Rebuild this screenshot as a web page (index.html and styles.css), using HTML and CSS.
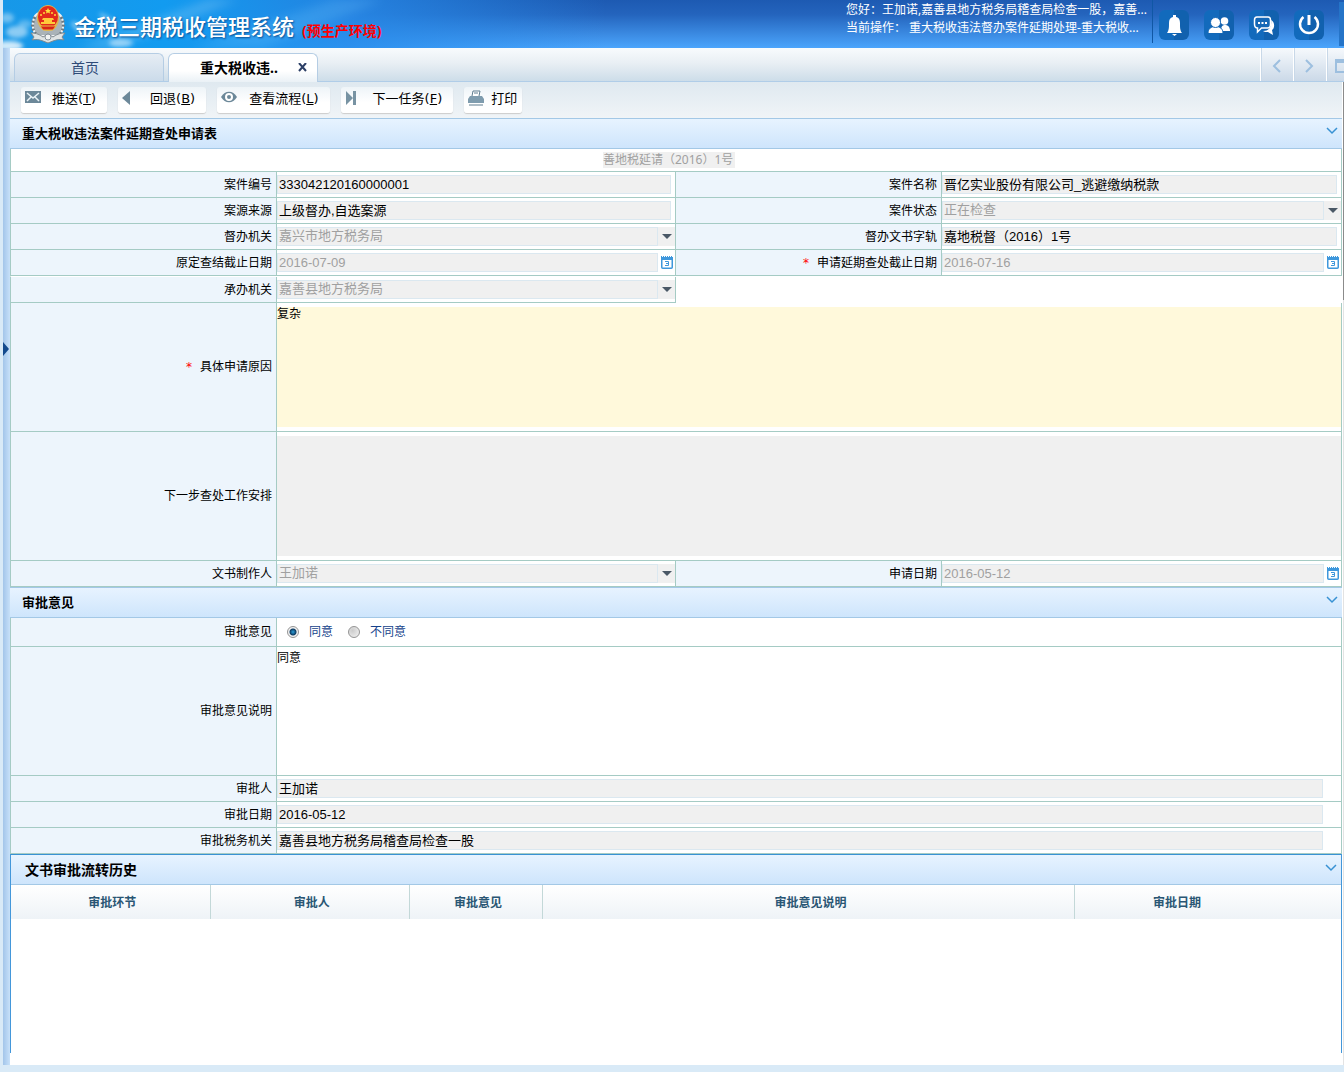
FILE: index.html
```html
<!DOCTYPE html>
<html lang="zh-CN">
<head>
<meta charset="utf-8">
<title>金税三期税收管理系统</title>
<link rel="stylesheet" href="styles.css">
</head>
<body>
<header class="top">
  <svg class="clouds" width="420" height="48" viewBox="0 0 420 48" aria-hidden="true">
    <defs>
      <filter id="soft" x="-30%" y="-30%" width="160%" height="160%"><feGaussianBlur stdDeviation="2"/></filter>
      <filter id="ray" x="-30%" y="-30%" width="160%" height="160%"><feGaussianBlur stdDeviation="5"/></filter>
    </defs>
    <g fill="#fff" filter="url(#soft)">
      <ellipse cx="6" cy="46" rx="14" ry="5" opacity=".8"/>
      <ellipse cx="14" cy="32" rx="11" ry="6" opacity=".5"/>
      <ellipse cx="22" cy="24" rx="7" ry="4" opacity=".3"/>
      <ellipse cx="4" cy="18" rx="7" ry="5" opacity=".4"/>
      <ellipse cx="78" cy="29" rx="12" ry="4" opacity=".4" transform="rotate(35 78 29)"/>
      <ellipse cx="118" cy="43" rx="12" ry="4" opacity=".5"/>
      <ellipse cx="106" cy="20" rx="12" ry="3" opacity=".35" transform="rotate(35 106 20)"/>
    </g>
    <path d="M75 48 205 0h30L110 48z" fill="#fff" opacity=".18" filter="url(#ray)"/>
    <path d="M190 48 330 0h50L260 48z" fill="#7fd0ff" opacity=".2" filter="url(#ray)"/>
  </svg>
  <svg class="emblem" width="36" height="40" viewBox="0 0 36 40" aria-hidden="true">
    <path d="M8 9C1 14 1 27 8 32h20c7-5 7-18 0-23" fill="#aab3b8" stroke="#eef1f2" stroke-width="2"/>
    <path d="M5 13c-4 7-3 14 3 19M31 13c4 7 3 14-3 19" fill="none" stroke="#6c7880" stroke-width="3" stroke-dasharray="2 2"/>
    <path d="M1 29c6 0 9 2 12 4l5-3 5 3c3-2 6-4 12-4l-3 4 2 3c-6-1-8 0-11 1l-5 2-5-2c-3-1-5-2-11-1l2-3z" fill="#dfe3e3" stroke="#7f898e"/>
    <circle cx="18" cy="33" r="3" fill="#f1f3f3" stroke="#87929a"/>
    <ellipse cx="18" cy="14" rx="11" ry="13" fill="#e0b34f"/>
    <ellipse cx="18" cy="13" rx="10" ry="11" fill="#e32a1c"/>
    <path d="M18 4l1 2h2l-1.500 1.500.5 2-2-1-2 1 .5-2L15 6h2z" fill="#ffe03c"/>
    <g fill="#ffd93a"><circle cx="11" cy="11" r="1"/><circle cx="14" cy="9" r="1"/><circle cx="22" cy="9" r="1"/><circle cx="25" cy="11" r="1"/></g>
    <path d="M13 14h10l1 2h-2v2h3v2H11v-2h3v-2h-2z" fill="#ffc93a"/>
    <path d="M10 22h16l-3 4H13z" fill="#d82318" stroke="#e9bb45"/>
  </svg>
  <h1 class="brand">金税三期税收管理系统</h1>
  <span class="env">(预生产环境)</span>
  <div class="who">
    <p>您好：王加诺,嘉善县地方税务局稽查局检查一股，嘉善...</p>
    <p>当前操作： 重大税收违法督办案件延期处理-重大税收...</p>
  </div>
  <nav class="tools">
    <button class="tool" aria-label="通知"><svg width="30" height="30" viewBox="0 0 30 30"><path d="M14 5h3v2c3 .5 4 3 4 6 0 5 0 7 2 10H8c2-3 2-5 2-10 0-3 1-5.500 4-6zM13 24h5l-2.500 2z" fill="#fff"/></svg></button>
    <button class="tool" aria-label="用户"><svg width="30" height="30" viewBox="0 0 30 30" fill="#fff"><circle cx="20.500" cy="11" r="3.800"/><path d="M17 21c0-4 1-6 4-6s5 2 5 6z"/><g stroke="#1468b6" stroke-width="1"><path d="M4 23.500c0-5 3-7 7.500-7s7.500 2 7.500 7z"/><circle cx="11.500" cy="12.500" r="5"/></g></svg></button>
    <button class="tool" aria-label="消息"><svg width="30" height="30" viewBox="0 0 30 30"><path d="M22 10c4 2 4 8 1 10l1 5-5-3c-2 0-4 0-5-1 6 0 9-4 8-11z" fill="#fff"/><path d="M8 7h11c2 0 2.500 1 2.500 3v4c0 3-1 4-3 4h-6l-4 4v-4C6 18 5.500 16 5.500 14v-4c0-2 1-3 2.500-3z" fill="#1468b6" stroke="#fff" stroke-width="1.500"/><path d="M9 12h2v2H9zM12.500 12h2v2h-2zM16 12h2v2h-2z" fill="#fff"/></svg></button>
    <button class="tool" aria-label="退出"><svg width="30" height="30" viewBox="0 0 30 30" fill="none" stroke="#fff"><path d="M9.500 7a9 9 0 1 0 11 0" stroke-width="2.500"/><path d="M15 5v10" stroke-width="3"/></svg></button>
    <span class="more"></span>
  </nav>
</header>

<div class="shell">
  <aside class="side"><button class="expand" aria-label="展开菜单"></button></aside>
  <main class="main">
    <div class="tabs">
      <a class="tab" href="#home">首页</a>
      <div class="tab current"><a href="#task">重大税收违..</a><button class="close" aria-label="关闭"><svg width="9" height="9" viewBox="0 0 9 9"><path d="M1 0l7 8M8 0L1 8" stroke="#2c3f66" stroke-width="2" fill="none"/></svg></button></div>
      <div class="pager">
        <button aria-label="向左"><svg width="32" height="33" viewBox="0 0 32 33"><path d="M19 12l-6 6 6 6" fill="none" stroke="#9dbfdf" stroke-width="2"/></svg></button>
        <button aria-label="向右"><svg width="32" height="33" viewBox="0 0 32 33"><path d="M12 12l6 6-6 6" fill="none" stroke="#9dbfdf" stroke-width="2"/></svg></button>
        <button aria-label="窗口"><svg width="32" height="33" viewBox="0 0 32 33"><path d="M9 12h14v12H9z" fill="none" stroke="#9dbfdf" stroke-width="2"/><path d="M8 11h16v4H8z" fill="#9dbfdf"/></svg></button>
      </div>
    </div>

    <div class="work">
      <div class="page">
        <div class="bar">
          <button class="act"><svg width="16" height="16" viewBox="0 0 16 16"><path d="M0 1h16v12H0z" fill="#6c8899"/><path d="M2 3l6 5 6-5M2 11l4-4M14 11l-4-4" fill="none" stroke="#eaf2f6" stroke-width="1.500"/></svg><span>推送(<u>T</u>)</span></button>
          <button class="act"><svg width="16" height="16" viewBox="0 0 16 16"><path d="M8 1v14L0 8z" fill="#6c8899"/></svg><span class="in">回退(<u>B</u>)</span></button>
          <button class="act"><svg width="16" height="16" viewBox="0 0 16 16"><path d="M0 7c4-7 12-7 16 0-4 7-12 7-16 0z" fill="#6c8899"/><circle cx="8" cy="7" r="3" fill="none" stroke="#fff" stroke-width="2"/></svg><span class="in">查看流程(<u>L</u>)</span></button>
          <button class="act"><svg width="16" height="16" viewBox="0 0 16 16"><path d="M1 1l7 7-7 7zM8 1h3v14H8z" fill="#7893a3"/></svg><span class="in">下一任务(<u>F</u>)</span></button>
          <button class="act print"><svg width="16" height="16" viewBox="0 0 16 16"><path d="M4 6l1-5h7l-1 5" fill="#fff" stroke="#5f7d8f"/><path d="M6 3h4" stroke="#5f7d8f"/><path d="M2 6h12l2 3v4H0V9z" fill="#7f9cae"/><path d="M1 15h14" stroke="#5f7d8f"/></svg><span>打印</span></button>
        </div>

        <h2 class="sec">重大税收违法案件延期查处申请表<button class="fold" aria-label="折叠"><svg width="12" height="8" viewBox="0 0 12 8"><path d="M1 1l5 5 5-5" fill="none" stroke="#3892d3" stroke-width="1.500"/></svg></button></h2>
        <form class="form">
          <div class="row title"><input aria-label="文书号" value="善地税延请（2016）1号" disabled></div>
          <div class="row">
            <label for="a1">案件编号</label><div class="cell"><input id="a1" class="box" value="333042120160000001" readonly></div>
            <label for="a2">案件名称</label><div class="cell"><input id="a2" class="box zh" value="晋亿实业股份有限公司_逃避缴纳税款" readonly></div>
          </div>
          <div class="row">
            <label for="a3">案源来源</label><div class="cell"><input id="a3" class="box zh" value="上级督办,自选案源" readonly></div>
            <label for="a4">案件状态</label><div class="cell drop"><select id="a4" class="box zh" disabled><option>正在检查</option></select><i class="arrow"></i></div>
          </div>
          <div class="row">
            <label for="a5">督办机关</label><div class="cell drop"><select id="a5" class="box zh" disabled><option>嘉兴市地方税务局</option></select><i class="arrow"></i></div>
            <label for="a6">督办文书字轨</label><div class="cell"><input id="a6" class="box zh" value="嘉地税督（2016）1号" readonly></div>
          </div>
          <div class="row">
            <label for="a7">原定查结截止日期</label><div class="cell date"><input id="a7" class="box" value="2016-07-09" disabled><svg class="cal" width="12" height="14" viewBox="0 0 12 14"><rect x=".75" y="1.750" width="10.500" height="11.500" rx="1" fill="#fff" stroke="#3e97dc" stroke-width="1.500"/><path d="M0 1h12v4H0z" fill="#3e97dc"/><path d="M1 1.500h11" stroke="#fff" stroke-dasharray="1 1"/><path d="M4 6.500h3.500v4H4M5 8.500h2.500" fill="none" stroke="#3e97dc"/></svg></div>
            <label for="a8"><span class="req">*</span>申请延期查处截止日期</label><div class="cell date"><input id="a8" class="box" value="2016-07-16" disabled><svg class="cal" width="12" height="14" viewBox="0 0 12 14"><rect x=".75" y="1.750" width="10.500" height="11.500" rx="1" fill="#fff" stroke="#3e97dc" stroke-width="1.500"/><path d="M0 1h12v4H0z" fill="#3e97dc"/><path d="M1 1.500h11" stroke="#fff" stroke-dasharray="1 1"/><path d="M4 6.500h3.500v4H4M5 8.500h2.500" fill="none" stroke="#3e97dc"/></svg></div>
          </div>
          <div class="row half">
            <label for="a9">承办机关</label><div class="cell drop"><select id="a9" class="box zh" disabled><option>嘉善县地方税务局</option></select><i class="arrow"></i></div>
          </div>
          <div class="row wide tall">
            <label for="b1"><span class="req">*</span>具体申请原因</label><div class="cell"><textarea id="b1" class="need">复杂</textarea></div>
          </div>
          <div class="row wide tall">
            <label for="b2">下一步查处工作安排</label><div class="cell"><textarea id="b2" disabled></textarea></div>
          </div>
          <div class="row">
            <label for="c1">文书制作人</label><div class="cell drop"><select id="c1" class="box zh" disabled><option>王加诺</option></select><i class="arrow"></i></div>
            <label for="c2">申请日期</label><div class="cell date"><input id="c2" class="box" value="2016-05-12" disabled><svg class="cal" width="12" height="14" viewBox="0 0 12 14"><rect x=".75" y="1.750" width="10.500" height="11.500" rx="1" fill="#fff" stroke="#3e97dc" stroke-width="1.500"/><path d="M0 1h12v4H0z" fill="#3e97dc"/><path d="M1 1.500h11" stroke="#fff" stroke-dasharray="1 1"/><path d="M4 6.500h3.500v4H4M5 8.500h2.500" fill="none" stroke="#3e97dc"/></svg></div>
          </div>
        </form>

        <h2 class="sec">审批意见<button class="fold" aria-label="折叠"><svg width="12" height="8" viewBox="0 0 12 8"><path d="M1 1l5 5 5-5" fill="none" stroke="#3892d3" stroke-width="1.500"/></svg></button></h2>
        <form class="form">
          <div class="row wide">
            <span class="name" id="op">审批意见</span>
            <div class="cell choice" role="radiogroup" aria-labelledby="op">
              <label><input type="radio" name="op" checked>同意</label>
              <label><input type="radio" name="op">不同意</label>
            </div>
          </div>
          <div class="row wide tall">
            <label for="d1">审批意见说明</label><div class="cell"><textarea id="d1">同意</textarea></div>
          </div>
          <div class="row wide"><label for="d2">审批人</label><div class="cell long"><input id="d2" class="box zh" value="王加诺" readonly></div></div>
          <div class="row wide"><label for="d3">审批日期</label><div class="cell long"><input id="d3" class="box" value="2016-05-12" readonly></div></div>
          <div class="row wide"><label for="d4">审批税务机关</label><div class="cell long"><input id="d4" class="box zh" value="嘉善县地方税务局稽查局检查一股" readonly></div></div>
        </form>

        <section class="history">
          <h2 class="sec">文书审批流转历史<button class="fold" aria-label="折叠"><svg width="12" height="8" viewBox="0 0 12 8"><path d="M1 1l5 5 5-5" fill="none" stroke="#3892d3" stroke-width="1.500"/></svg></button></h2>
          <table class="log">
            <thead><tr><th class="c15">审批环节</th><th class="c15">审批人</th><th class="c10">审批意见</th><th class="c40">审批意见说明</th><th class="c20">审批日期</th></tr></thead>
            <tbody></tbody>
          </table>
        </section>
      </div>
      <div class="scroll"><div class="thumb"></div></div>
    </div>
  </main>
</div>
</body>
</html>
```
FILE: styles.css
```css
* { box-sizing: border-box; }
body {
  margin: 0;
  min-height: 100vh;
  padding: 0 0 7px 3px;
  display: flex;
  flex-direction: column;
  overflow-x: hidden;
  background: #d9eaf7;
  font: 12px/16px "Noto Sans", "Noto Sans CJK SC", sans-serif;
  color: #000;
}
button {
  margin: 0;
  padding: 0;
  border: 0;
  background: none;
  font: inherit;
  color: inherit;
  cursor: pointer;
}
svg { display: block; flex: none; }
a { color: inherit; text-decoration: none; }
p, h1, h2 { margin: 0; }

/* top banner */
.top {
  position: relative;
  height: 48px;
  display: flex;
  align-items: center;
  overflow: hidden;
  color: #fff;
  background:
    linear-gradient(90deg, #1798e8 0, #129bf0 12%, rgba(38, 140, 235, .8) 26%, rgba(40, 120, 220, 0) 45%),
    linear-gradient(#1d5ab2 0, #2464bd 30%, #4ba5fc 100%);
}
.clouds { position: absolute; left: 0; top: 0; }
.emblem { position: relative; margin: 0 8px 0 27px; }
.brand {
  position: relative;
  font-size: 22px;
  line-height: 32px;
  font-weight: 500;
  margin-top: 4px;
  white-space: nowrap;
  text-shadow: 1px 1px 2px #0b4f94;
}
.env {
  position: relative;
  margin: 14px 0 0 8px;
  font-size: 14px;
  font-weight: 700;
  color: #f00;
  white-space: nowrap;
}
.who {
  margin-left: auto;
  width: 307px;
  height: 43px;
  align-self: flex-start;
  padding-top: 1px;
  border-right: 1px solid #1057a5;
  line-height: 18px;
  white-space: nowrap;
  overflow: hidden;
}
.tools { display: flex; gap: 15px; padding: 2px 0 0 6px; }
.tool {
  width: 30px;
  height: 30px;
  border-radius: 6px;
  background: linear-gradient(90deg, #126abc 50%, #1161ae 50%);
}
.more { width: 5px; height: 44px; margin: -8px 0 -6px; background: #2574c8; }

.shell { flex: 1; display: flex; }
.side {
  flex: 0 0 7px;
  background: linear-gradient(90deg, #a3c5e9, #b5d3f2 50%, #c8e1f9);
}
.expand {
  display: block;
  margin-top: 294px;
  border-left: 6px solid #134a8e;
  border-top: 7px solid transparent;
  border-bottom: 7px solid transparent;
}
.main { flex: 1; min-width: 0; display: flex; flex-direction: column; background: #fff; }

/* tabs */
.tabs {
  height: 34px;
  display: flex;
  align-items: flex-end;
  gap: 4px;
  padding-left: 4px;
  border-bottom: 1px solid #b0cde8;
  background: linear-gradient(#f8fbfd, #e9eff4 45%, #cddde9);
}
.tab {
  width: 150px;
  height: 28px;
  border: 1px solid #b5cde4;
  border-bottom: 0;
  border-radius: 6px 6px 0 0;
  background: linear-gradient(#e6edf4, #cbdbea);
  font-size: 14px;
  line-height: 28px;
  text-align: center;
  color: #2f4b78;
  padding-right: 8px;
}
.current {
  height: 29px;
  margin-bottom: -1px;
  padding: 0 10px 0 31px;
  display: flex;
  justify-content: space-between;
  background: linear-gradient(#fff 60%, #eaf1f6);
  font-weight: 700;
  color: #000;
}
.close { height: 27px; }
.pager { margin-left: auto; display: flex; width: 84px; overflow: hidden; }
.pager button {
  flex: 0 0 33px;
  border-left: 1px solid #fff;
  box-shadow: inset 1px 0 #c8d8e8;
  background: linear-gradient(#f6f9fc, #cbd9e8);
}

.work { flex: 1; display: flex; }
.page { flex: 1; min-width: 0; display: flex; flex-direction: column; padding-bottom: 12px; }
.scroll { flex: 0 0 2px; border-left: 1px solid #fff; background: #e3e3e3; }
.thumb { height: 218px; background: #8b8b8b; }

/* action bar */
.bar {
  height: 36px;
  display: flex;
  gap: 11px;
  padding: 5px 0 5px 11px;
  background: linear-gradient(#dfe9f0, #f0f4f7);
}
.act {
  display: flex;
  gap: 11px;
  padding: 3px 11px 0 4px;
  border-radius: 3px;
  background: linear-gradient(#eef4f8, #fff 60%);
  box-shadow: 0 1px 1px #ccc;
  font: 13px/17px "DejaVu Sans", "Noto Sans CJK SC", sans-serif;
  white-space: nowrap;
}
.in { padding-left: 1px; }
.print { gap: 7px; padding-right: 5px; }

/* section headings */
.sec {
  height: 31px;
  display: flex;
  align-items: center;
  justify-content: space-between;
  padding: 0 4px 2px 12px;
  border: solid #a3c8e6;
  border-width: 1px 0;
  background: linear-gradient(#e7f3ff, #cee5fc);
  font-size: 13px;
  font-weight: 700;
}
.fold { padding-bottom: 3px; }

/* form rows */
.row {
  display: grid;
  grid-template-columns: 2fr 3fr 2fr 3fr;
  min-height: 26px;
  border: solid #a5cbc4;
  border-width: 0 1px 1px;
}
.row > label, .name {
  display: flex;
  align-items: center;
  justify-content: flex-end;
  padding-right: 4px;
  border-right: 1px solid #a5cbc4;
  background: #edf5fc;
}
.req { margin-right: 8px; color: #f00; font-family: "DejaVu Sans", sans-serif; }
.cell { min-width: 0; display: flex; padding: 3px 4px 3px 0; }
.row > .cell:nth-child(2) { border-right: 1px solid #a5cbc4; }
.row.wide > .cell:nth-child(2) { border-right: 0; }
.wide { grid-template-columns: 1fr 4fr; }
.half { border-top: 1px solid #fff; border-right-color: #fff; border-bottom: 0; }
.half > * { border-bottom: 1px solid #a5cbc4; }
.box {
  flex: 1;
  min-width: 0;
  height: 19px;
  margin: 0;
  padding: 0 1px;
  border: 1px solid #dbe8f0;
  border-radius: 0;
  background: #f0f0f0;
  font: 13px/17px "Liberation Sans", "Noto Sans CJK SC", sans-serif;
  color: #000;
  appearance: none;
}
.zh { padding-bottom: 2px; line-height: 15px; }
.box:disabled { color: #a0a0a0; opacity: 1; }
.drop { padding-right: 0; }
.arrow {
  flex: 0 0 17px;
  height: 19px;
  background: #f0f0f0;
  display: flex;
  justify-content: center;
  align-items: center;
}
.arrow::before {
  content: "";
  border: 5px solid transparent;
  border-top-color: #4a5866;
  border-bottom: 0;
}
.date { gap: 3px; padding-right: 2px; }
.cal { margin-top: 2px; }
.long { padding-right: 18px; }
.title { display: flex; min-height: 23px; align-items: center; justify-content: center; padding-right: 14px; }
.title input {
  width: 132px;
  height: 16px;
  padding: 0;
  border: 0;
  background: #f0f0f0;
  font: inherit;
  color: #a0a0a0;
}
.tall .cell { padding: 4px 0; }
textarea {
  flex: 1;
  height: 120px;
  margin: 0;
  padding: 0;
  border: 0;
  resize: none;
  background: #fff;
  font: 12px/14px "Liberation Sans", "Noto Sans CJK SC", sans-serif;
  color: #000;
}
textarea:disabled { background: #f0f0f0; }
.need { background: #fff9db; }
.choice { min-height: 28px; padding: 0 10px; gap: 15px; align-items: center; color: #15428b; }
.choice label { display: flex; align-items: center; gap: 10px; }
.choice input {
  appearance: none;
  width: 12px;
  height: 12px;
  margin: 0;
  border: 1px solid #949494;
  border-radius: 50%;
  background: radial-gradient(circle at 35% 35%, #ccc, #f4f4f4);
}
.choice input:checked { background: radial-gradient(circle, #2aa0dc 0, #0f3c62 3px, #f2f2f2 4px); }

/* history */
.history { flex: 1; border: solid #4397da; border-width: 0 1px; }
.history .sec { border-top-color: #3892d3; font-size: 14px; padding: 0 4px 0 14px; }
.log { width: 100%; table-layout: fixed; border-collapse: separate; border-spacing: 0; }
.log th {
  height: 34px;
  padding: 2px 0 0 4px;
  border-right: 1px solid #c3d8d8;
  background: linear-gradient(#fff, #eef3f7);
  color: #2a5674;
  font-weight: 700;
}
.log th:last-child { border-right: 0; padding-right: 66px; }
.c15 { width: 15%; }
.c10 { width: 10%; }
.c40 { width: 40%; }
.c20 { width: 20%; }
```
